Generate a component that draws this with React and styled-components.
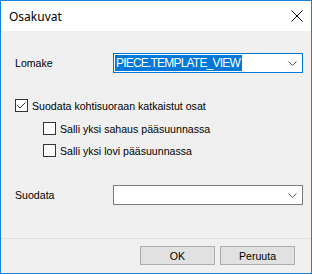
import React from 'react'
import styled, { createGlobalStyle } from 'styled-components';

const Global = createGlobalStyle`
  html, body { margin: 0; padding: 0; background: #ffffff; }
  * { box-sizing: border-box; }
`

const Window = styled.div`
  width: 312px;
  height: 274px;
  border: 1px solid #1883d7;
  display: flex;
  flex-direction: column;
  font-family: "Liberation Sans", Arial, sans-serif;
  font-size: 10.6px;
  color: #000;
  background: #f0f0f0;
`

const TitleBar = styled.div`
  height: 30px;
  background: #fff;
  display: flex;
  align-items: center;
  justify-content: space-between;
  padding: 0 8px 0 8px;

  span{
    font-size: 12px;
    font-family: "Noto Sans", "Liberation Sans", sans-serif;
    color: #000;
  }
`

const Body = styled.div`
  flex: 1;
  display: flex;
  flex-direction: column;
  padding: 22px 8px 0 14px;
`

const FieldRow = styled.div`
  display: flex;
  align-items: center;
  height: 20px;
  margin-top: ${p => p.$top || 0}px;

  label{
    width: 98px;
  }
`

const Combo = styled.div`
  width: 190px;
  height: 20px;
  background: #fff;
  border: 1px solid ${p => p.$focus ? '#0078d7' : '#7a7a7a'};
  display: flex;
  align-items: center;
  padding: 1px;
  position: relative;

  .value{
    background: #0078d7;
    color: #fff;
    font-size: 12px;
    letter-spacing: -0.8px;
    line-height: 16px;
    height: 16px;
    padding: 0 2px 0 1px;
  }

  svg{
    position: absolute;
    right: 5px;
    top: 7px;
  }
`

const CheckRow = styled.div`
  display: flex;
  align-items: center;
  gap: 4px;
  height: 17px;
  margin-top: ${p => p.$top}px;
  padding-left: ${p => p.$indent || 0}px;
`

const Box = styled.span`
  width: 13px;
  height: 13px;
  border: 1px solid #333;
  background: #fff;
  display: inline-flex;
  align-items: center;
  justify-content: center;
`

const Footer = styled.div`
  border-top: 1px solid #dfdfdf;
  height: 35px;
  display: flex;
  justify-content: flex-end;
  gap: 5px;
  padding: 7px 16px 0 0;
`

const Button = styled.button`
  width: 75px;
  height: 19px;
  background: #e1e1e1;
  border: 1px solid #adadad;
  font-family: "Liberation Sans", Arial, sans-serif;
  font-size: 10.6px;
  color: #000;
  padding: 0;
`

const Chevron = () => (
  <svg width="9" height="5" viewBox="0 0 9 5">
    <path d="M0.5 0.5 L4.5 4.5 L8.5 0.5" fill="none" stroke="#555" strokeWidth="1" />
  </svg>
)

const Check = ({checked, label, top, indent}) => (
  <CheckRow $top={top} $indent={indent}>
    <Box>
      {checked && (
        <svg width="11" height="11" viewBox="0 0 11 11">
          <path d="M1.5 5.5 L4 8 L9.5 2.5" fill="none" stroke="#333" strokeWidth="1" />
        </svg>
      )}
    </Box>
    <span>{label}</span>
  </CheckRow>
)

export default function App() {
  return (
    <Window>
      <Global />
      <TitleBar>
        <span>Osakuvat</span>
        <svg width="12" height="12" viewBox="0 0 12 12">
          <path d="M0.5 0.5 L11.5 11.5 M11.5 0.5 L0.5 11.5" stroke="#000" strokeWidth="1" />
        </svg>
      </TitleBar>
      <Body>
        <FieldRow>
          <label>Lomake</label>
          <Combo $focus>
            <span className='value'>PIECE.TEMPLATE_VIEW</span>
            <Chevron />
          </Combo>
        </FieldRow>
        <Check checked label="Suodata kohtisuoraan katkaistut osat" top={24} />
        <Check label="Salli yksi sahaus pääsuunnassa" top={6} indent={28} />
        <Check label="Salli yksi lovi pääsuunnassa" top={5} indent={28} />
        <FieldRow $top={26}>
          <label>Suodata</label>
          <Combo>
            <Chevron />
          </Combo>
        </FieldRow>
      </Body>
      <Footer>
        <Button>OK</Button>
        <Button>Peruuta</Button>
      </Footer>
    </Window>
  );
}
